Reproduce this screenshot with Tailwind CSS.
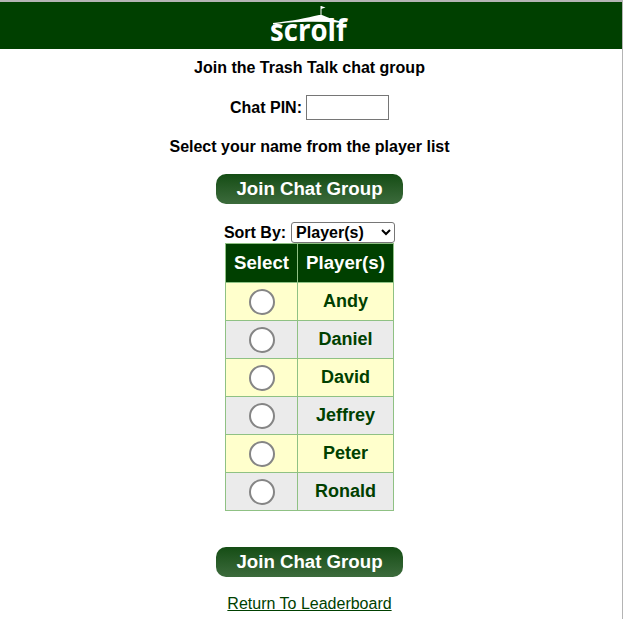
<!DOCTYPE html>
<html lang="en">
<head>
    <meta charset="UTF-8">
    <title>Join Chat Group</title>
    <script src="https://cdn.jsdelivr.net/npm/@tailwindcss/browser@4"></script>
</head>
<body class="bg-white font-['Liberation_Sans',Arial,sans-serif]">

<div class="h-[619px] overflow-hidden border-t-2 border-r border-[#b4b4b4]">
    <!-- Header -->
    <div class="h-[47px] bg-[#004000] flex justify-center">
        <div class="relative w-[80px] h-[47px] -ml-[1px]">
            <svg class="absolute left-0 top-0" width="80" height="47" viewBox="0 0 80 47" fill="none">
                <path d="M2 21 C20 19 36 16 48 13 L51 13 C58 16 66 19 75 21 C60 20 45 19.5 30 20 C20 20.2 10 21 2 22.5 Z" fill="white"/>
                <path d="M50 13 V4" stroke="white" stroke-width="1"/>
                <path d="M50 4 L54.5 5.5 L50 7 Z" fill="white"/>
            </svg>
            <span class="absolute left-[-1px] top-[8px] origin-left scale-x-[0.92] text-[30px] leading-[40px] font-bold text-white font-['Open_Sans',sans-serif]">scrolf</span>
        </div>
    </div>

    <div class="w-[619px] flex flex-col items-center text-black font-bold text-base">
        <p class="mt-[10px] h-[18px] leading-[18px]">Join the Trash Talk chat group</p>

        <div class="mt-[18px] h-[25px] flex items-center gap-[4px]">
            <label for="pin">Chat PIN:</label>
            <input id="pin" type="text" class="w-[83px] h-[25px] border border-[#767676] bg-white">
        </div>

        <p class="mt-[18px] h-[18px] leading-[18px]">Select your name from the player list</p>

        <button class="mt-[18px] w-[187px] h-[30px] rounded-[10px] bg-gradient-to-b from-[#144d14] to-[#3c6b3c] text-white text-[18.67px] font-bold">Join Chat Group</button>

        <div class="mt-[18px] h-[21px] flex items-center gap-[5px]">
            <label class="font-bold">Sort By:</label>
            <select class="w-[104px] h-[21px] border border-[#767676] rounded-[3px] bg-white text-base font-bold">
                <option>Player(s)</option>
            </select>
        </div>

        <table class="border-collapse w-[169px] text-lg text-[#004000] table-fixed">
            <thead>
                <tr class="h-[39px] bg-[#004000] text-white text-[18.67px]">
                    <th class="w-[72px] border border-[#8fc184] font-bold">Select</th>
                    <th class="border border-[#8fc184] font-bold">Player(s)</th>
                </tr>
            </thead>
            <tbody>
                <tr class="h-[38px] bg-[#ffffcc]">
                    <td class="pt-[1px] border border-[#8fc184] text-center"><input type="radio" name="player" class="appearance-none block mx-auto w-[26px] h-[26px] rounded-full border-2 border-[#858585] bg-white"></td>
                    <td class="pb-[2px] border border-[#8fc184] text-center">Andy</td>
                </tr>
                <tr class="h-[38px] bg-[#ebebeb]">
                    <td class="pt-[1px] border border-[#8fc184] text-center"><input type="radio" name="player" class="appearance-none block mx-auto w-[26px] h-[26px] rounded-full border-2 border-[#858585] bg-white"></td>
                    <td class="pb-[2px] border border-[#8fc184] text-center">Daniel</td>
                </tr>
                <tr class="h-[38px] bg-[#ffffcc]">
                    <td class="pt-[1px] border border-[#8fc184] text-center"><input type="radio" name="player" class="appearance-none block mx-auto w-[26px] h-[26px] rounded-full border-2 border-[#858585] bg-white"></td>
                    <td class="pb-[2px] border border-[#8fc184] text-center">David</td>
                </tr>
                <tr class="h-[38px] bg-[#ebebeb]">
                    <td class="pt-[1px] border border-[#8fc184] text-center"><input type="radio" name="player" class="appearance-none block mx-auto w-[26px] h-[26px] rounded-full border-2 border-[#858585] bg-white"></td>
                    <td class="pb-[2px] border border-[#8fc184] text-center">Jeffrey</td>
                </tr>
                <tr class="h-[38px] bg-[#ffffcc]">
                    <td class="pt-[1px] border border-[#8fc184] text-center"><input type="radio" name="player" class="appearance-none block mx-auto w-[26px] h-[26px] rounded-full border-2 border-[#858585] bg-white"></td>
                    <td class="pb-[2px] border border-[#8fc184] text-center">Peter</td>
                </tr>
                <tr class="h-[38px] bg-[#ebebeb]">
                    <td class="pt-[1px] border border-[#8fc184] text-center"><input type="radio" name="player" class="appearance-none block mx-auto w-[26px] h-[26px] rounded-full border-2 border-[#858585] bg-white"></td>
                    <td class="pb-[2px] border border-[#8fc184] text-center">Ronald</td>
                </tr>
            </tbody>
        </table>

        <button class="mt-[36px] w-[187px] h-[30px] rounded-[10px] bg-gradient-to-b from-[#144d14] to-[#3c6b3c] text-white text-[18.67px] font-bold">Join Chat Group</button>

        <a href="#" class="mt-[15px] text-base font-normal text-[#004000] underline">Return To Leaderboard</a>
    </div>
</div>

</body>
</html>
